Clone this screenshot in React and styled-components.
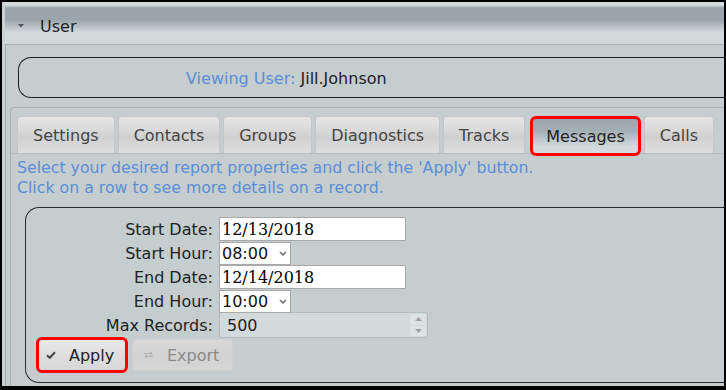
import React from 'react';
import styled, { createGlobalStyle } from 'styled-components';

const GlobalStyle = createGlobalStyle`
  html, body {
    margin: 0;
    padding: 0;
    background: #c5cdcf;
  }
  body {
    font-family: "DejaVu Sans", Verdana, sans-serif;
  }
  * {
    box-sizing: border-box;
  }
`;

const Frame = styled.div`
  width: 726px;
  height: 390px;
  border: 2px solid #000;
  border-bottom-width: 4px;
  background: #c9d0d1;
  padding-left: 3px;
  overflow: hidden;
`;

const Section = styled.section`
  display: flex;
  flex-direction: column;
  height: 100%;
  background: #c5cdcf;
`;

const Header = styled.div`
  flex-shrink: 0;
  display: flex;
  align-items: center;
  gap: 16px;
  height: 43px;
  padding: 6px 0 0 13px;
  background: linear-gradient(
    #d6dbdd 0,
    #d6dbdd 3px,
    #9aa6ab 6px,
    #9aa6ab 18px,
    #d1d8da 30px,
    #d3d9db 100%
  );
  border-bottom: 1px solid #a6aeb0;
  color: #222;
  font-size: 16px;
`;

const Body = styled.div`
  flex: 1;
  display: flex;
  flex-direction: column;
  border-left: 1px solid #a3abad;
`;

const ViewingBox = styled.div`
  flex-shrink: 0;
  display: flex;
  align-items: center;
  height: 41px;
  margin: 12px 0 0 12px;
  padding: 1px 0 0 167px;
  border: 1px solid #1e1e1e;
  border-right: none;
  border-radius: 13px 0 0 13px;
  font-size: 16px;
  color: #222;
`;

const Blue = styled.span`
  color: #5b8ed6;
`;

const TabsPanel = styled.div`
  flex: 1;
  margin: 9px 0 0 4px;
  border: 1px solid #a9b1b3;
  border-right: none;
  border-bottom: none;
  border-radius: 4px 0 0 0;
`;

const TabNav = styled.div`
  display: flex;
  align-items: flex-start;
  gap: 3px;
  height: 46px;
  padding: 8px 0 0 6px;
  border-bottom: 1px solid #b3bbbd;
`;

const Tab = styled.div`
  flex-shrink: 0;
  display: flex;
  align-items: center;
  height: ${({ $active }) => ($active ? '40px' : '37px')};
  margin-left: ${({ $active }) => ($active ? '2px' : '0')};
  padding: 0 ${({ $active }) => ($active ? '13px' : '15px')};
  border: ${({ $active }) => ($active ? '3px solid #ff0000' : '1px solid #c6c6c6')};
  border-bottom: ${({ $active }) => ($active ? '3px solid #ff0000' : 'none')};
  border-radius: ${({ $active }) => ($active ? '6px' : '4px 4px 0 0')};
  background: ${({ $active }) =>
    $active
      ? 'linear-gradient(#9ba7ac 0%, #a4afb4 35%, #d2d9db 80%, #d6dcde 100%)'
      : 'linear-gradient(#e4e4e4 0%, #dcdcdc 30%, #d0d0d0 55%, #dadada 85%, #dddddd 100%)'};
  color: ${({ $active }) => ($active ? '#222' : '#444')};
  font-size: 16px;
  white-space: nowrap;
`;

const Hint = styled.div`
  margin-top: 4px;
  padding-left: 6px;
  font-size: 15.75px;
  line-height: 20px;
  color: #5b8ed6;
`;

const FormBox = styled.div`
  height: 176px;
  margin: 9px 0 0 14px;
  padding: 9px 0 0 0;
  border: 1px solid #2a2a2a;
  border-right: none;
  border-radius: 14px 0 0 14px;
`;

const FormGrid = styled.div`
  display: grid;
  grid-template-columns: 187px max-content;
  grid-auto-rows: 24px;
  column-gap: 6px;
  align-items: center;
`;

const Label = styled.label`
  justify-self: end;
  font-size: 16px;
  color: #222;
`;

const TextInput = styled.input`
  width: 187px;
  height: 24px;
  padding: 0 2px;
  border: 1px solid #a9a9a9;
  background: #fff;
  font-family: "DejaVu Serif", "Liberation Serif", serif;
  font-size: 16px;
  color: #000;
  outline: none;
`;

const SelectWrap = styled.div`
  position: relative;
  width: 72px;
  height: 23px;
`;

const Select = styled.select`
  appearance: none;
  width: 100%;
  height: 100%;
  padding: 0 0 0 2px;
  border: 1px solid #a9a9a9;
  border-radius: 0;
  background: #fff;
  font-family: "DejaVu Sans", sans-serif;
  font-size: 16px;
  color: #111;
`;

const Chevron = styled.svg`
  position: absolute;
  right: 4px;
  top: 9px;
  pointer-events: none;
`;

const NumberWrap = styled.div`
  display: flex;
  width: 209px;
  height: 26px;
  border: 1px solid #b2babc;
  border-radius: 3px;
  background: #d3dadc;
`;

const NumberField = styled.input`
  flex: 1;
  min-width: 0;
  padding-left: 7px;
  border: none;
  background: transparent;
  font-family: "DejaVu Sans", sans-serif;
  font-size: 16px;
  color: #222;
  outline: none;
`;

const Spinner = styled.div`
  display: flex;
  flex-direction: column;
  width: 16px;
  margin: 1px 1px 1px 0;
  background: #dde3e4;
  border-radius: 2px;
`;

const SpinHalf = styled.div`
  flex: 1;
  display: flex;
  align-items: center;
  justify-content: center;
  & + & {
    border-top: 1px solid #cfd6d8;
  }
`;

const ButtonRow = styled.div`
  display: flex;
  align-items: center;
  gap: 4px;
  margin-left: 10px;
`;

const Button = styled.button`
  display: flex;
  align-items: center;
  gap: ${({ $primary }) => ($primary ? '13px' : '13px')};
  height: ${({ $primary }) => ($primary ? '36px' : '32px')};
  width: ${({ $primary }) => ($primary ? '92px' : '101px')};
  padding: 0 0 0 ${({ $primary }) => ($primary ? '7px' : '10px')};
  border: ${({ $primary }) => ($primary ? '3px solid #ff0000' : '1px solid #cfcfcf')};
  border-radius: ${({ $primary }) => ($primary ? '6px' : '3px')};
  background: ${({ $primary }) =>
    $primary
      ? 'linear-gradient(#e8e8e8 0%, #dedede 50%, #d8d8d8 100%)'
      : 'linear-gradient(#d9d9d9 0%, #d2d2d2 50%, #d6d6d6 100%)'};
  color: ${({ $primary }) => ($primary ? '#222' : '#8a8a8a')};
  font-family: "DejaVu Sans", sans-serif;
  font-size: 16px;
  cursor: pointer;
`;

const tabs = ['Settings', 'Contacts', 'Groups', 'Diagnostics', 'Tracks', 'Messages', 'Calls'];

const ChevronIcon = () => (
  <Chevron width="8" height="5" viewBox="0 0 8 5">
    <path d="M1 1 L4 4 L7 1" fill="none" stroke="#666" strokeWidth="1.4" />
  </Chevron>
);

const HourSelect = ({ value }) => (
  <SelectWrap>
    <Select defaultValue={value}>
      {['08:00', '09:00', '10:00', '11:00'].map(h => (
        <option key={h}>{h}</option>
      ))}
    </Select>
    <ChevronIcon />
  </SelectWrap>
);

export default function App() {
  return (
    <>
      <GlobalStyle />
      <Frame>
        <Section>
          <Header>
            <svg width="6" height="4" viewBox="0 0 6 4">
              <polygon points="0,0 6,0 3,3.5" fill="#555" />
            </svg>
            <span>User</span>
          </Header>
          <Body>
            <ViewingBox>
              <Blue>Viewing User:&nbsp;</Blue>Jill.Johnson
            </ViewingBox>
            <TabsPanel>
              <TabNav>
                {tabs.map(t => (
                  <Tab key={t} $active={t === 'Messages'}>{t}</Tab>
                ))}
              </TabNav>
              <Hint>
                Select your desired report properties and click the 'Apply' button.
                <br />
                Click on a row to see more details on a record.
              </Hint>
              <FormBox>
                <FormGrid>
                  <Label>Start Date:</Label>
                  <TextInput defaultValue="12/13/2018" readOnly />
                  <Label>Start Hour:</Label>
                  <HourSelect value="08:00" />
                  <Label>End Date:</Label>
                  <TextInput defaultValue="12/14/2018" readOnly />
                  <Label>End Hour:</Label>
                  <HourSelect value="10:00" />
                  <Label>Max Records:</Label>
                  <NumberWrap>
                    <NumberField defaultValue="500" readOnly />
                    <Spinner>
                      <SpinHalf>
                        <svg width="7" height="4" viewBox="0 0 7 4">
                          <polygon points="0,4 7,4 3.5,0" fill="#a0a0a0" />
                        </svg>
                      </SpinHalf>
                      <SpinHalf>
                        <svg width="7" height="4" viewBox="0 0 7 4">
                          <polygon points="0,0 7,0 3.5,4" fill="#a0a0a0" />
                        </svg>
                      </SpinHalf>
                    </Spinner>
                  </NumberWrap>
                </FormGrid>
                <ButtonRow>
                  <Button $primary>
                    <svg width="10" height="8" viewBox="0 0 10 8">
                      <path d="M1 4.2 L3.8 6.8 L9 1.2" fill="none" stroke="#444" strokeWidth="2" />
                    </svg>
                    Apply
                  </Button>
                  <Button>
                    <svg width="11" height="8" viewBox="0 0 11 8">
                      <path d="M1 2.5 H9 M7 0.8 L9.2 2.5 L7 4.2 M10 5.5 H2 M4 3.8 L1.8 5.5 L4 7.2" fill="none" stroke="#b0b0b0" strokeWidth="1" />
                    </svg>
                    Export
                  </Button>
                </ButtonRow>
              </FormBox>
            </TabsPanel>
          </Body>
        </Section>
      </Frame>
    </>
  );
}
